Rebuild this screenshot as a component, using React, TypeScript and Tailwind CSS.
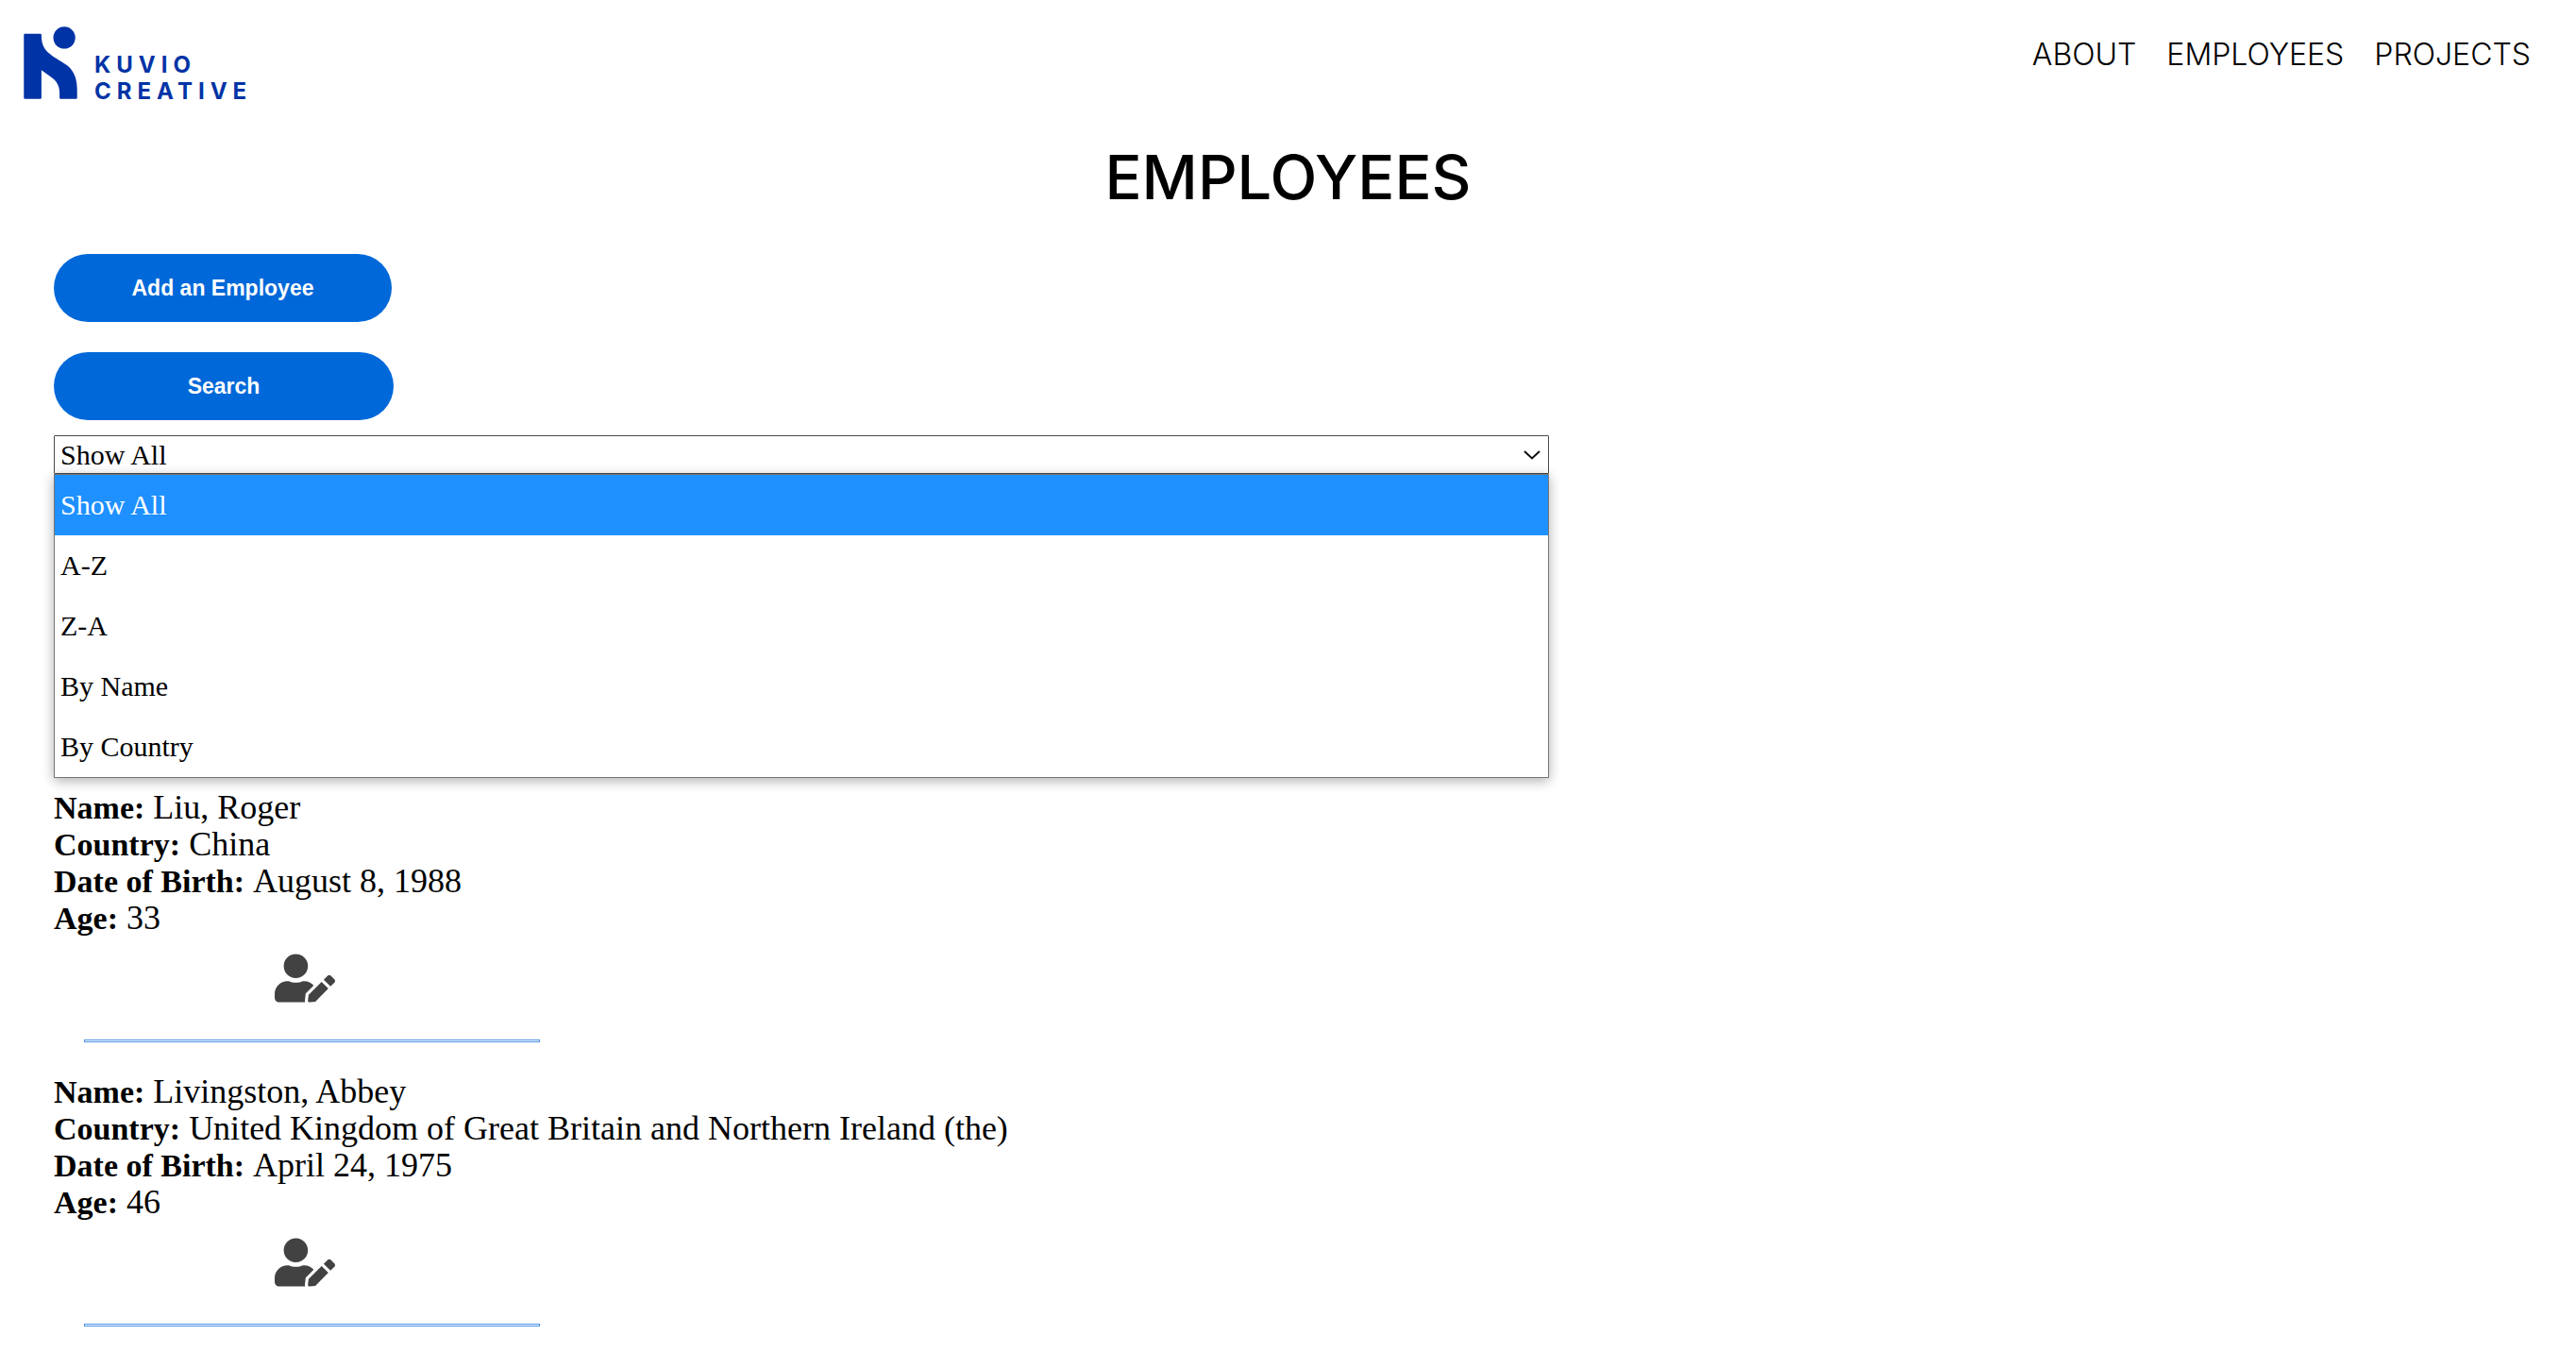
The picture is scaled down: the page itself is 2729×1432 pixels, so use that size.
import { FaUserEdit } from "react-icons/fa";

const navLinks = ["ABOUT", "EMPLOYEES", "PROJECTS"];

const filters = ["Show All", "A-Z", "Z-A", "By Name", "By Country"];

const employees = [
  { name: "Liu, Roger", country: "China", born: "August 8, 1988", age: 33 },
  {
    name: "Livingston, Abbey",
    country: "United Kingdom of Great Britain and Northern Ireland (the)",
    born: "April 24, 1975",
    age: 46,
  },
];

function Logo() {
  return (
    <a href="#home" aria-label="Kuvio Creative" className="flex items-end gap-[18px] text-[#0033a6]">
      <svg viewBox="75 83 170 232" className="h-[77px] w-[57px]" fill="currentColor" aria-hidden="true">
        <circle cx="204" cy="119" r="35" />
        <path d="M78 106H128Q131 106 131 109C131 136 137 151 152 166C168 181 196 194 215 209C236 227 245 252 245 286V311Q245 314 242 314H192Q189 314 189 311V296C189 277 183 264 171 252C161 242 144 232 131 222V311Q131 314 128 314H78Q75 314 75 311V109Q75 106 78 106Z" />
      </svg>
      <span className="-mb-1.5 font-[Inter,sans-serif] text-2xl leading-7 font-bold tracking-[6px]">
        KUVIO
        <br />
        CREATIVE
      </span>
    </a>
  );
}

function Field({ label, value }: { label: string; value: string | number }) {
  return (
    <div>
      <dt className="inline text-[34px] font-bold">{label}:</dt> <dd className="inline">{value}</dd>
    </div>
  );
}

export default function App() {
  return (
    <div className="bg-white font-['Liberation_Serif',serif] text-black">
      <header className="flex items-start justify-between pt-7 pr-12 pl-[25px]">
        <Logo />
        <nav className="flex gap-8 pt-2.5 font-[Inter,sans-serif] text-[32px] leading-10 font-light">
          {navLinks.map((link) => (
            <a key={link} href={"#" + link.toLowerCase()}>
              {link}
            </a>
          ))}
        </nav>
      </header>

      <main className="px-[57px]">
        <h1 className="mt-11 text-center font-[Inter,sans-serif] text-[65px] leading-[78px] font-medium">EMPLOYEES</h1>

        <div className="mt-[42px] flex flex-col items-start gap-8 font-['Liberation_Sans',sans-serif] text-[23px] font-bold text-white">
          <button type="button" className="h-[72px] w-[358px] rounded-full bg-[#0068d9]">
            Add an Employee
          </button>
          <button type="button" className="h-[72px] w-[360px] rounded-full bg-[#0068d9]">
            Search
          </button>
        </div>

        <div className="mt-4 w-[1584px] max-w-full text-[30px]">
          <div className="relative">
            <select
              aria-label="Filter employees"
              defaultValue="Show All"
              className="block h-[41px] w-full appearance-none rounded-[1px] border border-[#4a4a4a] bg-white px-1.5 leading-9"
            >
              {filters.map((filter) => (
                <option key={filter}>{filter}</option>
              ))}
            </select>
            <svg
              viewBox="0 0 18 10"
              className="pointer-events-none absolute top-4 right-[9px] h-[10px] w-[18px]"
              fill="none"
              stroke="#101010"
              strokeWidth="2"
              aria-hidden="true"
            >
              <path d="M1 1l8 7.5L17 1" />
            </svg>
          </div>
          <ul
            role="listbox"
            aria-label="Filter options"
            className="relative border border-[#767676] bg-white leading-16 shadow-[0_3px_12px_rgba(0,0,0,0.32)]"
          >
            {filters.map((filter, i) => (
              <li
                key={filter}
                role="option"
                aria-selected={i === 0}
                className="px-1.5 aria-selected:bg-[#1e90ff] aria-selected:text-white"
              >
                {filter}
              </li>
            ))}
          </ul>
        </div>

        <section aria-label="Employee list" className="mt-3">
          {employees.map((employee) => (
            <article key={employee.name} className="mb-[33px]">
              <dl className="text-4xl leading-[39px]">
                <Field label="Name" value={employee.name} />
                <Field label="Country" value={employee.country} />
                <Field label="Date of Birth" value={employee.born} />
                <Field label="Age" value={employee.age} />
              </dl>
              <button
                type="button"
                aria-label={"Edit " + employee.name}
                className="mt-[18px] ml-[234px] block text-[#424242]"
              >
                <FaUserEdit className="h-[52px] w-16" />
              </button>
              <hr className="mt-[39px] ml-8 h-[3px] w-[483px] border border-[#4a90e2]" />
            </article>
          ))}
        </section>
      </main>
    </div>
  );
}
